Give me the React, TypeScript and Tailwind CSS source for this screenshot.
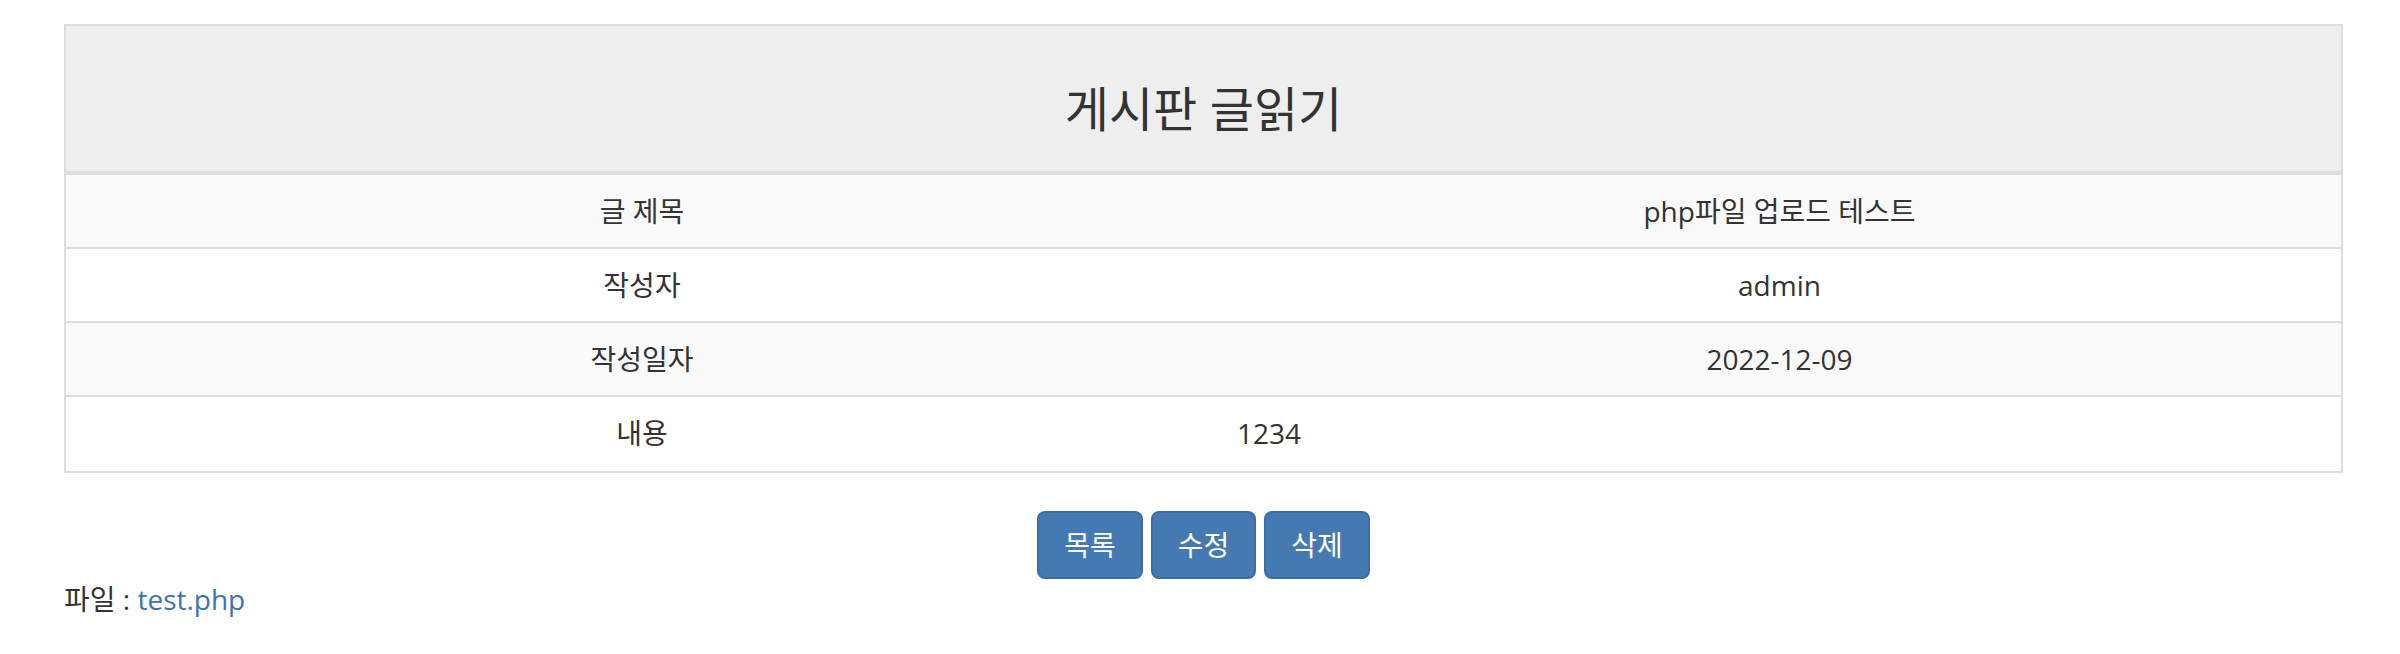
import React from "react";

const rows = [
  { label: "글 제목", value: "php파일 업로드 테스트", align: "center" },
  { label: "작성자", value: "admin", align: "center" },
  { label: "작성일자", value: "2022-12-09", align: "center" },
  { label: "내용", value: "1234", align: "left" },
];

export default function App() {
  return (
    <div className="min-h-[654px] bg-white pl-[64px] pt-[24px] font-['Open_Sans','Noto_Sans_CJK_KR',sans-serif] text-[28px] leading-[40px] text-[#333333]">
      <div className="w-[2279px]">
        {/* 게시판 글읽기 */}
        <div className="border-2 border-[#dddddd]">
          <div className="border-b-4 border-[#dddddd] bg-[#eeeeee] pb-[36px] pt-[56px] text-center">
            <h3 className="text-[48px] font-normal leading-[53px] text-[#333333]">게시판 글읽기</h3>
          </div>
          {rows.map((row, i) => (
            <div
              key={row.label}
              className={
                "grid h-[74px] grid-cols-[1152px_1fr] " +
                (i % 2 === 0 ? "bg-[#f9f9f9] " : "bg-white ") +
                (i < rows.length - 1 ? "border-b-2 border-[#dddddd]" : "")
              }
            >
              <div className="px-4 py-4 text-center">{row.label}</div>
              <div className={row.align === "center" ? "px-4 py-4 text-center" : "py-4 pl-[19px] pr-4 text-left"}>
                {row.value}
              </div>
            </div>
          ))}
        </div>

        <div className="mt-[38px] flex justify-center gap-2">
          {["목록", "수정", "삭제"].map((label) => (
            <button
              key={label}
              className="h-[68px] rounded-[8px] border-2 border-[#3a6ea6] bg-[#4579b2] px-[25px] text-[28px] leading-[40px] text-white"
            >
              {label}
            </button>
          ))}
        </div>

        <div className="mt-0">
          파일 : <a className="text-[#3b74b2]">test.php</a>
        </div>
      </div>
    </div>
  );
}
